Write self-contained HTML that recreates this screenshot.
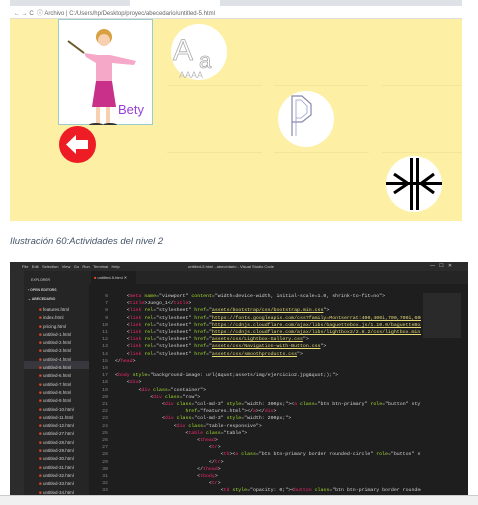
<!DOCTYPE html>
<html><head><meta charset="utf-8"><style>
*{margin:0;padding:0;box-sizing:border-box}
body{width:478px;height:505px;background:#fff;position:relative;overflow:hidden;font-family:"Liberation Sans",sans-serif}
.a{position:absolute}
.code{font-family:"Liberation Mono",monospace;font-size:4.9px;white-space:pre;color:#d4d4d4;line-height:7.2px}
.t{color:#f92672}.s{color:#e6db74;text-decoration:underline}.at{color:#a6e22e}.n{color:#858585}
.f{font-size:4px;color:#ccc;white-space:nowrap}
</style></head><body>
<div class="a" style="left:10px;top:0;width:452px;height:6px;background:#dee1e6"></div>
<div class="a" style="left:130px;top:0;width:90px;height:6px;background:#fff"></div>
<div class="a" style="left:10px;top:6px;width:452px;height:13px;background:#fff;border-bottom:1px solid #ddd"></div>
<div class="a" style="left:14px;top:8px;font-size:6px;color:#666;white-space:nowrap">← → C&nbsp;&nbsp;ⓘ Archivo | C:/Users/hp/Desktop/proyec/abecedario/untitled-5.html</div>
<div class="a" style="left:10px;top:19px;width:452px;height:202px;background:#fdf0a4"></div>
<div class="a" style="left:167px;top:85px;width:95px;height:1px;background:#f3e59a"></div>
<div class="a" style="left:274px;top:85px;width:95px;height:1px;background:#f3e59a"></div>
<div class="a" style="left:382px;top:85px;width:80px;height:1px;background:#f3e59a"></div>
<div class="a" style="left:167px;top:152px;width:95px;height:1px;background:#f3e59a"></div>
<div class="a" style="left:274px;top:152px;width:95px;height:1px;background:#f3e59a"></div>
<div class="a" style="left:382px;top:152px;width:80px;height:1px;background:#f3e59a"></div>
<div class="a" style="left:58px;top:19px;width:95px;height:106px;background:#fff;border:1px solid #9cc"></div>
<svg class="a" style="left:58px;top:19px" width="95" height="106">
<circle cx="46" cy="18" r="8" fill="#d8a040"/><circle cx="46" cy="21" r="6" fill="#f6d0b0"/>
<line x1="10" y1="22" x2="26" y2="34" stroke="#6a5a2a" stroke-width="2"/>
<path d="M26 34 L40 36 L52 36 L78 42 L76 46 L54 44 L54 62 L38 62 L38 44 L28 38Z" fill="#f5a8c8"/>
<path d="M38 62 L54 62 L58 88 L34 88Z" fill="#c8308a"/>
<rect x="38" y="88" width="4" height="18" fill="#f6d0b0"/><rect x="48" y="88" width="4" height="18" fill="#f6d0b0"/>
<ellipse cx="38" cy="106" rx="7" ry="2" fill="#333"/><ellipse cx="52" cy="106" rx="7" ry="2" fill="#333"/>
<text x="60" y="95" font-family="Liberation Sans" font-size="13" fill="#9a40d8">Bety</text>
</svg>
<svg class="a" style="left:171px;top:24px" width="56" height="56"><circle cx="28" cy="28" r="28" fill="#fff"/>
<text x="2" y="36" font-family="Liberation Sans" font-size="30" fill="none" stroke="#aaa" stroke-width=".8">A</text>
<text x="28" y="44" font-family="Liberation Sans" font-size="22" fill="none" stroke="#aaa" stroke-width=".8">a</text>
<text x="8" y="54" font-family="Liberation Sans" font-size="9" fill="#bbb">AAAA</text></svg>
<svg class="a" style="left:278px;top:91px" width="56" height="56"><circle cx="28" cy="28" r="28" fill="#fff"/>
<path d="M14 45 V5 H24 L33 13 V24 L24 31 H14" fill="none" stroke="#88a" stroke-width="1.2"/>
<path d="M18 45 V9 H23 L29 15 V22 L23 27 H18" fill="none" stroke="#99c" stroke-width=".8"/></svg>
<svg class="a" style="left:59px;top:126px" width="37" height="37"><circle cx="18.5" cy="18.5" r="18.5" fill="#ee1c24"/>
<path d="M7 18.5 L17 9 V14 H29 V23 H17 V28Z" fill="#fff"/></svg>
<svg class="a" style="left:386px;top:156px" width="56" height="56"><circle cx="28" cy="28" r="28" fill="#fff"/>
<rect x="24" y="2" width="3" height="52" fill="#000"/><rect x="30" y="2" width="3" height="52" fill="#000"/>
<rect x="0" y="26" width="56" height="3" fill="#000"/>
<path d="M8 18 L22 27.5 L8 37 M48 18 L35 27.5 L48 37" fill="none" stroke="#000" stroke-width="3"/></svg>
<div class="a" style="left:10px;top:236px;font-size:9.5px;font-style:italic;color:#44546a">Ilustración 60:Actividades del nivel 2</div>
<div class="a" style="left:10px;top:262px;width:458px;height:233px;background:#1e1e1e"></div>
<div class="a" style="left:10px;top:262px;width:458px;height:9px;background:#2b2b2b"></div>
<div class="a f" style="left:22px;top:264px;font-size:4px">File&nbsp;&nbsp; Edit&nbsp;&nbsp; Selection&nbsp;&nbsp; View&nbsp;&nbsp; Go&nbsp;&nbsp; Run&nbsp;&nbsp; Terminal&nbsp;&nbsp; Help</div>
<div class="a f" style="left:188px;top:264px">untitled-5.html - abecedario - Visual Studio Code</div>
<div class="a f" style="left:430px;top:263px;font-size:5px">—&nbsp;&nbsp; ☐&nbsp;&nbsp; ✕</div>
<div class="a" style="left:10px;top:271px;width:14px;height:224px;background:#2c2c2c"></div>
<div class="a" style="left:24px;top:271px;width:65px;height:224px;background:#252526"></div>
<div class="a" style="left:89px;top:271px;width:379px;height:13px;background:#252526"></div>
<div class="a" style="left:91px;top:271px;width:45px;height:13px;background:#1e1e1e"></div>
<div class="a f" style="left:94px;top:275px"><span style="color:#e44d26">■</span> untitled-5.html ✕</div>
<div class="a f" style="left:31px;top:278px;font-size:3.5px">EXPLORER</div>
<div class="a f" style="left:28px;top:288px;font-size:3.5px;font-weight:bold">› OPEN EDITORS</div>
<div class="a f" style="left:28px;top:297px;font-size:3.5px;font-weight:bold">⌄ ABECEDARIO</div>
<div class="a" style="left:24px;top:361px;width:65px;height:8px;background:#37373d"></div>
<div class="a f" style="left:39px;top:306px;line-height:8.3px;font-size:4.5px">
<span style="color:#e44d26">■</span> features.html<br><span style="color:#e44d26">■</span> index.html<br><span style="color:#e44d26">■</span> pricing.html<br><span style="color:#e44d26">■</span> untitled-1.html<br><span style="color:#e44d26">■</span> untitled-2.html<br><span style="color:#e44d26">■</span> untitled-3.html<br><span style="color:#e44d26">■</span> untitled-4.html<br><span style="color:#e44d26">■</span> untitled-5.html<br><span style="color:#e44d26">■</span> untitled-6.html<br><span style="color:#e44d26">■</span> untitled-7.html<br><span style="color:#e44d26">■</span> untitled-8.html<br><span style="color:#e44d26">■</span> untitled-9.html<br><span style="color:#e44d26">■</span> untitled-10.html<br><span style="color:#e44d26">■</span> untitled-11.html<br><span style="color:#e44d26">■</span> untitled-12.html<br><span style="color:#e44d26">■</span> untitled-27.html<br><span style="color:#e44d26">■</span> untitled-28.html<br><span style="color:#e44d26">■</span> untitled-29.html<br><span style="color:#e44d26">■</span> untitled-30.html<br><span style="color:#e44d26">■</span> untitled-31.html<br><span style="color:#e44d26">■</span> untitled-32.html<br><span style="color:#e44d26">■</span> untitled-33.html<br><span style="color:#e44d26">■</span> untitled-34.html</div>
<div class="a" style="left:423px;top:293px;width:38px;height:45px;background:#2a2a2a"></div>
<div class="a code n" style="left:96px;top:293px;text-align:right;width:12px">6
7
8
9
10
11
12
13
14
15
16
17
18
19
20
21
22
23
24
25
26
27
28
29
30
31
32
33</div>
<div class="a code" style="left:115px;top:293px;width:306px;overflow:hidden">    &lt;<span class="t">meta</span> <span class="at">name</span>="viewport" <span class="at">content</span>="width=device-width, initial-scale=1.0, shrink-to-fit=no"&gt;
    &lt;<span class="t">title</span>&gt;Juego_1&lt;/<span class="t">title</span>&gt;
    &lt;<span class="t">link</span> <span class="at">rel</span>="stylesheet" <span class="at">href</span>="<span class="s">assets/bootstrap/css/bootstrap.min.css</span>"&gt;
    &lt;<span class="t">link</span> <span class="at">rel</span>="stylesheet" <span class="at">href</span>="<span class="s">https://fonts.googleapis.com/css?family=Montserrat:400,400i,700,700i,600</span>
    &lt;<span class="t">link</span> <span class="at">rel</span>="stylesheet" <span class="at">href</span>="<span class="s">https://cdnjs.cloudflare.com/ajax/libs/baguettebox.js/1.10.0/baguetteBox</span>
    &lt;<span class="t">link</span> <span class="at">rel</span>="stylesheet" <span class="at">href</span>="<span class="s">https://cdnjs.cloudflare.com/ajax/libs/lightbox2/2.8.2/css/lightbox.min.</span>
    &lt;<span class="t">link</span> <span class="at">rel</span>="stylesheet" <span class="at">href</span>="<span class="s">assets/css/Lightbox-Gallery.css</span>"&gt;
    &lt;<span class="t">link</span> <span class="at">rel</span>="stylesheet" <span class="at">href</span>="<span class="s">assets/css/Navigation-with-Button.css</span>"&gt;
    &lt;<span class="t">link</span> <span class="at">rel</span>="stylesheet" <span class="at">href</span>="<span class="s">assets/css/smoothproducts.css</span>"&gt;
&lt;/<span class="t">head</span>&gt;

&lt;<span class="t">body</span> <span class="at">style</span>="background-image: url(&amp;quot;assets/img/ejercicio2.jpg&amp;quot;);"&gt;
    &lt;<span class="t">div</span>&gt;
        &lt;<span class="t">div</span> <span class="at">class</span>="container"&gt;
            &lt;<span class="t">div</span> <span class="at">class</span>="row"&gt;
                &lt;<span class="t">div</span> <span class="at">class</span>="col-md-3" <span class="at">style</span>="width: 300px;"&gt;&lt;<span class="t">a</span> <span class="at">class</span>="btn btn-primary" <span class="at">role</span>="button" styl
                        <span class="at">href</span>="features.html"&gt;&lt;/<span class="t">a</span>&gt;&lt;/<span class="t">div</span>&gt;
                &lt;<span class="t">div</span> <span class="at">class</span>="col-md-3" <span class="at">style</span>="width: 200px;"&gt;
                    &lt;<span class="t">div</span> <span class="at">class</span>="table-responsive"&gt;
                        &lt;<span class="t">table</span> <span class="at">class</span>="table"&gt;
                            &lt;<span class="t">thead</span>&gt;
                                &lt;<span class="t">tr</span>&gt;
                                    &lt;<span class="t">th</span>&gt;&lt;<span class="t">a</span> <span class="at">class</span>="btn btn-primary border rounded-circle" <span class="at">role</span>="button" st
                                &lt;/<span class="t">tr</span>&gt;
                            &lt;/<span class="t">thead</span>&gt;
                            &lt;<span class="t">tbody</span>&gt;
                                &lt;<span class="t">tr</span>&gt;
                                    &lt;<span class="t">td</span> <span class="at">style</span>="opacity: 0;"&gt;&lt;<span class="t">button</span> <span class="at">class</span>="btn btn-primary border rounded</div>
<div class="a" style="left:0;top:495px;width:478px;height:10px;background:#f0f0f0;border-top:1px solid #ccc"></div>
</body></html>
